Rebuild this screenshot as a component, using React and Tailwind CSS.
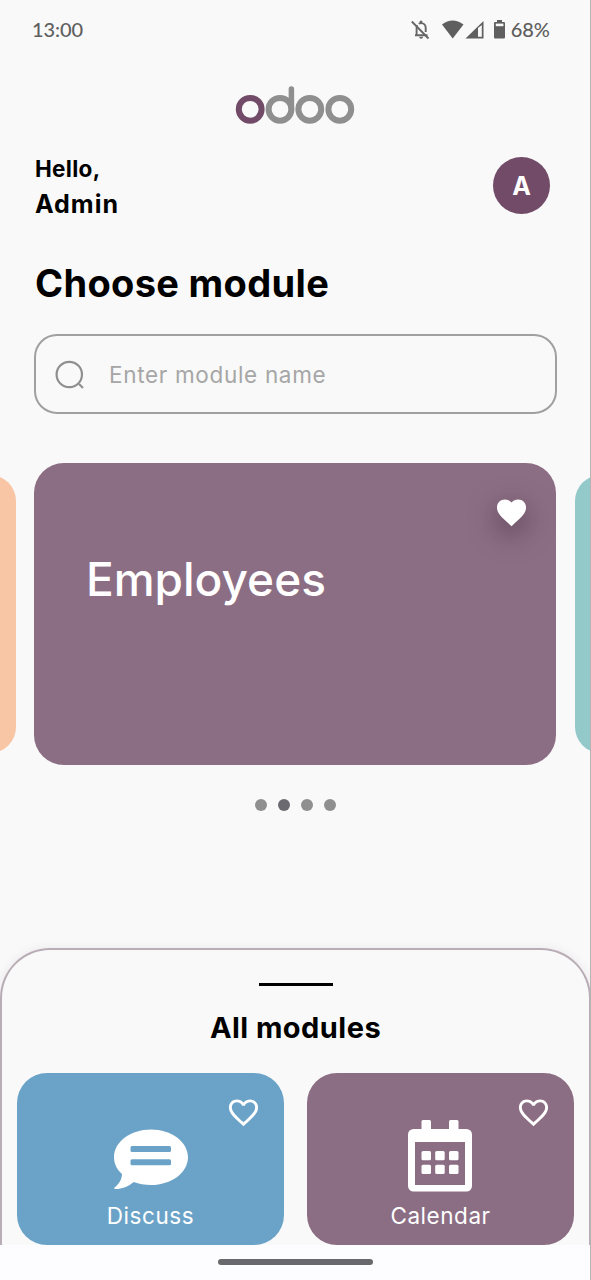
import { MdFavorite, MdFavoriteBorder } from "react-icons/md";

function StatusBar() {
  return (
    <div className="flex h-[58px] shrink-0 items-center justify-between pl-[32px] pr-[41px] font-['Lato'] text-[20px] font-medium text-[#5f5f5f]">
      <span className="tracking-[-0.1px]">13:00</span>
      <div className="flex items-center">
        <svg className="-translate-x-px translate-y-px" width="94" height="24" viewBox="0 0 94 24" fill="none">
          <g stroke="#666" strokeWidth="1.9">
            <path d="M.8 3.500 17.500 20.500" />
            <path d="M4 17.300h12.500M5.600 17v-7c0-1 .3-2 .8-2.800M7.800 5.800c.600-.400 1.500-.700 2.200-.700 2.800 0 4.700 2 4.700 4.800v4" />
          </g>
          <circle cx="10" cy="4" r="1.500" fill="#666" />
          <path d="M8.200 18.800h3.800a1.900 1.900 0 0 1-3.800 0z" fill="#666" />
          <path d="M31 6.500Q41.500 -1.500 52.500 6.500L41.700 20.500z" fill="#5f5f5f" />
          <path d="M54.500 20.500 72.500 3v17.500z" fill="#5f5f5f" />
          <path d="M67 10v8.800h3.800V7z" fill="#f9f9f9" />
          <path d="M86 2h5v2h1.700c.8 0 1.300.5 1.300 1.300v13.900c0 .8-.5 1.300-1.300 1.300h-8.400c-.8 0-1.300-.5-1.300-1.300V5.300c0-.8.500-1.300 1.300-1.300h1.700z" fill="#5f5f5f" />
          <path d="M84.800 5.600h7.600v2.600h-7.600z" fill="#f9f9f9" />
        </svg>
        <span className="ml-[5px]">68%</span>
      </div>
    </div>
  );
}

function Logo() {
  return (
    <div className="flex h-[68px] shrink-0 justify-center pt-[27px]">
      <svg className="-translate-x-px" width="120" height="40" viewBox="0 0 120 40" fill="none" strokeWidth="6">
        <circle cx="104.800" cy="24.300" r="11.400" stroke="#8f8f8f" />
        <circle cx="74.800" cy="24.300" r="11.400" stroke="#8f8f8f" />
        <circle cx="45" cy="24.300" r="11.400" stroke="#8f8f8f" />
        <path d="M56.400 24V4" stroke="#8f8f8f" strokeWidth="5.500" strokeLinecap="round" />
        <circle cx="15.200" cy="24.300" r="11.400" stroke="#714b67" />
      </svg>
    </div>
  );
}

function DiscussIcon() {
  return (
    <svg width="74" height="72" viewBox="0 0 74 72" fill="#fff">
      <path
        fillRule="evenodd"
        d="M37 9.500c20.400 0 37 12.300 37 27.700S57.400 65 37 65c-6.300 0-12.200-1-17.200-3C14.500 66.500 8 69 1.500 69c-1.400 0-1.600-1-.7-1.700C4.500 64.500 8 59.500 8 54 3 49.500 0 43.700 0 37.200 0 21.800 16.600 9.500 37 9.500zM18 26a1.500 1.500 0 0 0-1.500 1.500v3A1.500 1.500 0 0 0 18 32h37.500a1.500 1.500 0 0 0 1.500-1.500v-3a1.500 1.500 0 0 0-1.500-1.500zM18 39.200a1.500 1.500 0 0 0-1.500 1.500v3a1.500 1.500 0 0 0 1.500 1.500h37.500a1.500 1.500 0 0 0 1.500-1.500v-3a1.500 1.500 0 0 0-1.500-1.500z"
      />
    </svg>
  );
}

function CalendarIcon() {
  return (
    <svg className="-translate-x-px" width="64" height="72" viewBox="0 0 64 72" fill="#fff">
      <rect x="13.500" y="0" width="9.500" height="13" rx="1.500" />
      <rect x="41" y="0" width="9.500" height="13" rx="1.500" />
      <path
        fillRule="evenodd"
        d="M5.500 9h53a5.500 5.500 0 0 1 5.500 5.500V66a5.500 5.500 0 0 1-5.500 5.500h-53A5.500 5.500 0 0 1 0 66V14.500A5.500 5.500 0 0 1 5.500 9zM7 22v43h50V22z"
      />
      {[31, 44.8].map((y) =>
        [13.5, 27.2, 41].map((x) => (
          <rect key={`${x}-${y}`} x={x} y={y} width="9.500" height="9.200" rx="1.500" />
        ))
      )}
    </svg>
  );
}

function ModuleCard({ label, color, icon }) {
  return (
    <div className={`relative flex h-[172px] w-[267px] flex-col items-center rounded-[30px] pt-[47px] ${color}`}>
      {icon}
      <MdFavoriteBorder className="absolute right-[23px] top-[22px] size-[35px] text-white" />
      <span className="mt-[10px] text-[22.5px] font-normal leading-[28px] tracking-[0.55px] text-white">{label}</span>
    </div>
  );
}

export default function App() {
  return (
    <div className="relative flex h-[1280px] w-[591px] flex-col overflow-hidden bg-[#f9f9f9] font-['Inter',sans-serif] text-black">
      <StatusBar />
      <Logo />

      <header className="flex h-[128px] shrink-0 justify-between pl-[35px] pr-[41px] pt-[24px]">
        <div className="flex flex-col pt-[4px] font-bold">
          <span className="text-[22.5px] leading-[29px] tracking-[0.3px]">Hello,</span>
          <span className="mt-[6px] text-[25px] leading-[31px] tracking-[1px]">Admin</span>
        </div>
        <div className="mt-[7px] flex size-[57px] items-center justify-center rounded-full bg-[#714b67] pt-[2px] text-[25px] font-bold text-white">
          A
        </div>
      </header>

      <h1 className="h-[80px] shrink-0 pl-[35px] pt-[5px] text-[38px] font-bold leading-[48px] tracking-[0.33px]">Choose module</h1>

      <div className="mx-[34px] flex h-[80px] shrink-0 items-center rounded-[23px] border-2 border-[#a0a0a0] pl-[19px]">
        <svg className="translate-y-px" width="30" height="30" viewBox="0 0 30 30" fill="none" stroke="#8f8f8f" strokeWidth="2.200">
          <circle cx="14.300" cy="14.500" r="12.700" />
          <path d="m24 24 4 4" />
        </svg>
        <span className="ml-[24px] pt-[2px] text-[22.5px] font-normal tracking-[0.68px] text-[#a6a6a6]">Enter module name</span>
      </div>

      <div className="mx-[-84px] mt-[49px] flex h-[302px] shrink-0 items-center justify-between">
        <div className="h-[278px] w-[99.5px] rounded-[26px] bg-[#f8c6a4]" />
        <div className="relative h-[302px] w-[522px] rounded-[30px] bg-[#8c6e84] pl-[52px] pt-[87px]">
          <span className="text-[46px] font-medium leading-[58px] text-white">Employees</span>
          <MdFavorite className="absolute right-[27px] top-[32px] size-[35px] text-white drop-shadow-[0_9px_14px_rgba(40,20,35,0.6)]" />
        </div>
        <div className="h-[278px] w-[100.5px] rounded-[26px] bg-[#94c9c9]" />
      </div>

      <div className="mt-[34px] flex h-[12px] shrink-0 justify-center gap-[11px]">
        <span className="size-[12px] rounded-full bg-[#8f8f8f]" />
        <span className="size-[12px] rounded-full bg-[#6b6a70]" />
        <span className="size-[12px] rounded-full bg-[#8f8f8f]" />
        <span className="size-[12px] rounded-full bg-[#8f8f8f]" />
      </div>

      <section className="mt-[137px] flex h-[297px] shrink-0 flex-col items-center rounded-t-[50px] border-x-2 border-t-2 border-[#b9adb5] pt-[33px] shadow-[0_0_10px_rgba(113,75,103,0.1)]">
        <div className="h-[3px] w-[74px] bg-black" />
        <h2 className="mt-[23px] text-[29px] font-bold leading-[38px] tracking-[0.45px]">All modules</h2>
        <div className="mt-[26px] flex gap-[23px]">
          <ModuleCard label="Discuss" color="bg-[#6ba3c8]" icon={<DiscussIcon />} />
          <ModuleCard label="Calendar" color="bg-[#8c6e84]" icon={<CalendarIcon />} />
        </div>
      </section>

      <footer className="relative flex h-[35px] shrink-0 justify-center bg-[#fdfcfe] pt-[14px]">
        <div className="h-[6px] w-[155px] rounded-full bg-[#69686c]" />
      </footer>
      <div className="absolute right-0 top-0 h-full w-px bg-[#b5b5b5]" />
    </div>
  );
}
